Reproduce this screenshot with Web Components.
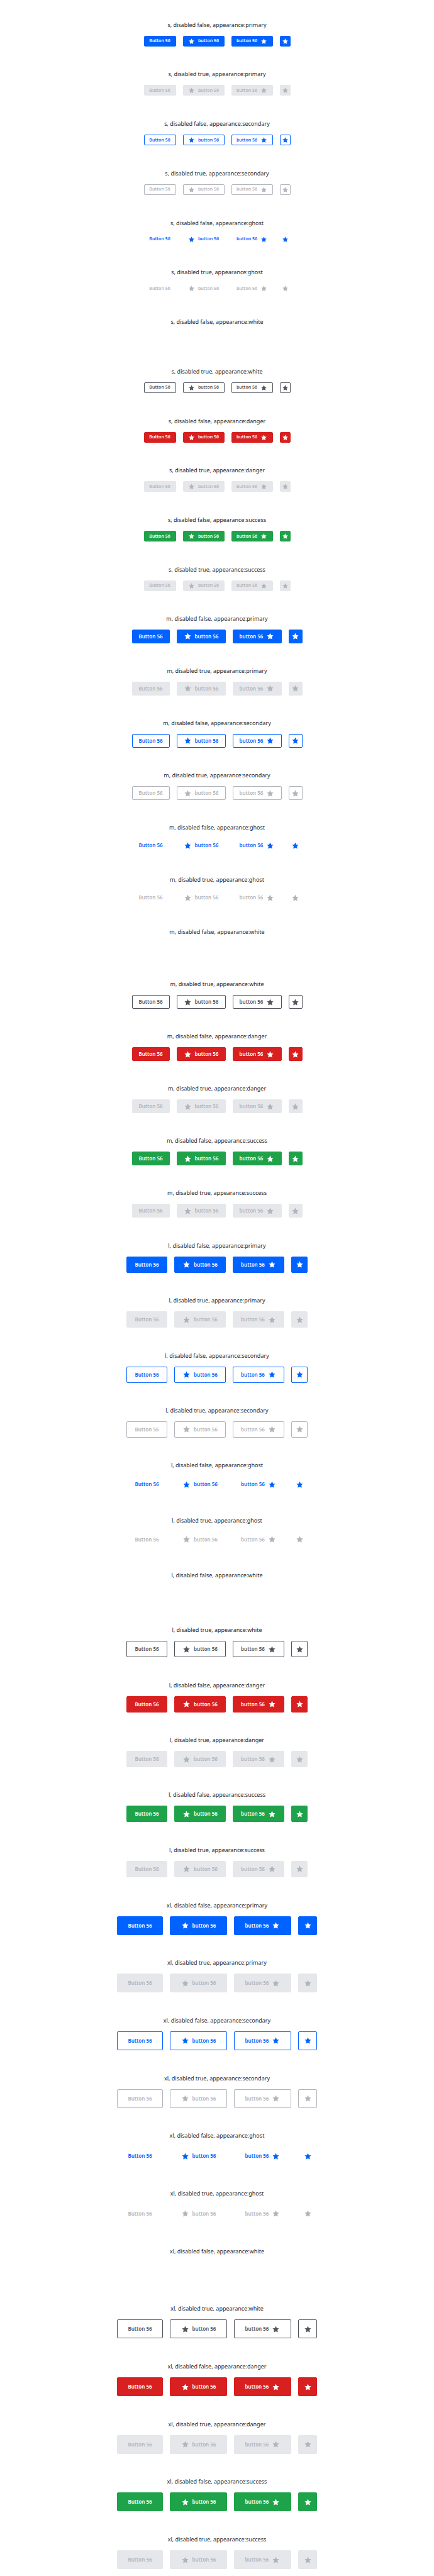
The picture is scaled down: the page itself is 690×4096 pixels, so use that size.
<!DOCTYPE html>
<html lang="en">
<head>
<meta charset="utf-8">
<meta name="viewport" content="width=device-width, initial-scale=1">
<title>Button showcase</title>
<style>
  body { margin: 0; background: #fff; color: #23262d; font-family: "Noto Sans", sans-serif; }
</style>
</head>
<body>
<button-gallery></button-gallery>

<template id="star-icon-template">
  <style>
    :host { display: block; flex: none; width: var(--icon-size, 13px); height: var(--icon-size, 13px); }
    svg { display: block; width: 100%; height: 100%; fill: currentColor; }
  </style>
  <svg viewBox="0 0 24 24" aria-hidden="true"><path d="M12 2.800L15 9l6.500.7-4.800 4.600 1.400 6.700L12 18.400 5.900 21l1.400-6.700L2.500 9.700 9 9z"/></svg>
</template>

<template id="ui-button-template">
  <style>
    :host {
      display: block;
      --height: 22px; --width: 60px; --width-icon: 78px; --font: 8px; --gap: 5px;
      --bg: #0062ff; --fg: #fff; --line: var(--bg);
    }
    :host([size="s"]) { --height: 17px; --width: 51px; --width-icon: 66px; --font: 7px; --icon-size: 11px; }
    :host([size="l"]) { --height: 26px; --width: 65px; --width-icon: 82px; }
    :host([size="xl"]) { --height: 30px; --width: 73px; --width-icon: 91px; }

    :host([appearance="danger"]) { --bg: #d92020; }
    :host([appearance="success"]) { --bg: #1fa34a; }
    :host([appearance="secondary"]) { --bg: #fff; --fg: #0062ff; --line: #0062ff; }
    :host([appearance="ghost"]) { --bg: #fff; --fg: #0062ff; }
    :host([appearance="white"]) { --bg: #fff; --fg: #fff; }
    :host([disabled]) { --bg: #e6e7eb; --fg: #b1b4bb; }
    :host([disabled][appearance="secondary"]) { --bg: #fff; --line: #b1b4bb; }
    :host([disabled][appearance="ghost"]) { --bg: #fff; --line: #fff; }
    :host([disabled][appearance="white"]) { --bg: #fff; --fg: #51545c; --line: #51545c; }

    button {
      display: flex; align-items: center; justify-content: center; gap: var(--gap);
      box-sizing: border-box; min-width: var(--width); height: var(--height);
      margin: 0; padding: 0; border: 1px solid var(--line); border-radius: 2px;
      background: var(--bg); color: var(--fg);
      font: 600 var(--font)/12px "Noto Sans", sans-serif; white-space: nowrap;
    }
    :host([icon]) button { min-width: var(--width-icon); }
    :host([icon="only"]) button { min-width: var(--height); }
    :host([icon="right"]) button { flex-direction: row-reverse; }
  </style>
  <button type="button"><slot></slot></button>
</template>

<template id="button-row-template">
  <style>
    :host {
      display: flex; flex: 1 0 auto; flex-direction: column; align-items: center; justify-content: flex-end;
      gap: 11px; padding: 16px 11px 5px;
    }
    h2 { margin: 0; font-size: 9px; line-height: 13px; font-weight: 400; white-space: nowrap; }
    div { display: flex; gap: 11px; }
  </style>
  <h2></h2>
  <div>
    <ui-button>Button 56</ui-button>
    <ui-button icon="left">button 56</ui-button>
    <ui-button icon="right">button 56</ui-button>
    <ui-button icon="only"></ui-button>
  </div>
</template>

<template id="button-gallery-template">
  <style>
    :host { display: flex; flex-direction: column; box-sizing: border-box; min-height: 100vh; padding-bottom: 6px; }
    section { display: flex; flex-direction: column; flex: var(--share) 0 0px; }
  </style>
</template>

<script>
  const stamp = (host, id) => {
    const root = host.attachShadow({ mode: "open" });
    root.append(document.getElementById(id).content.cloneNode(true));
    return root;
  };

  class StarIcon extends HTMLElement {
    constructor() { super(); stamp(this, "star-icon-template"); }
  }

  class UiButton extends HTMLElement {
    connectedCallback() {
      if (this.shadowRoot) return;
      const button = stamp(this, "ui-button-template").querySelector("button");
      button.disabled = this.hasAttribute("disabled");
      if (this.hasAttribute("icon")) button.prepend(document.createElement("star-icon"));
      if (this.getAttribute("icon") === "only") {
        button.querySelector("slot").remove();
        button.setAttribute("aria-label", "Star");
      }
    }
  }

  class ButtonRow extends HTMLElement {
    connectedCallback() {
      if (this.shadowRoot) return;
      const root = stamp(this, "button-row-template");
      const size = this.getAttribute("size");
      const appearance = this.getAttribute("appearance");
      const disabled = this.hasAttribute("disabled");
      root.querySelector("h2").textContent = `${size}, disabled ${disabled}, appearance:${appearance}`;
      for (const button of root.querySelectorAll("ui-button")) {
        button.setAttribute("size", size);
        button.setAttribute("appearance", appearance);
        button.toggleAttribute("disabled", disabled);
      }
    }
  }

  /* Share of the page's height that each size's section takes. */
  const SIZES = { s: 146, m: 154, l: 162, xl: 170 };
  const APPEARANCES = ["primary", "secondary", "ghost", "white", "danger", "success"];

  class ButtonGallery extends HTMLElement {
    connectedCallback() {
      if (this.shadowRoot) return;
      const root = stamp(this, "button-gallery-template");
      for (const [size, share] of Object.entries(SIZES)) {
        const section = document.createElement("section");
        section.style.setProperty("--share", share);
        for (const appearance of APPEARANCES) {
          for (const disabled of [false, true]) {
            const row = document.createElement("button-row");
            row.setAttribute("size", size);
            row.setAttribute("appearance", appearance);
            row.toggleAttribute("disabled", disabled);
            section.append(row);
          }
        }
        root.append(section);
      }
    }
  }

  customElements.define("star-icon", StarIcon);
  customElements.define("ui-button", UiButton);
  customElements.define("button-row", ButtonRow);
  customElements.define("button-gallery", ButtonGallery);
</script>
</body>
</html>
